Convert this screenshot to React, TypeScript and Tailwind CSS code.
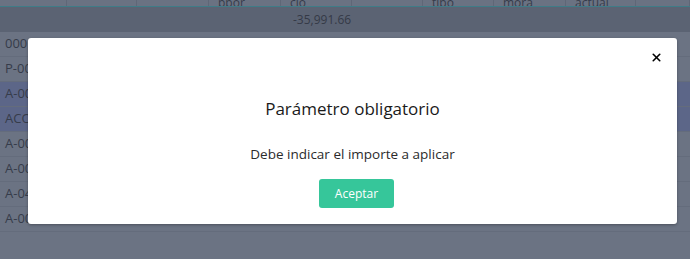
import { X } from 'lucide-react';

const cols = [67, 70, 72, 72, 71, 71, 71, 72, 70, 54];
const headers = ['', '', '', 'ppor', 'cio', '', 'tipo', 'mora', 'actual', ''];
const rows = [
  { code: '000', hi: false },
  { code: 'P-00', hi: false },
  { code: 'A-00', hi: true },
  { code: 'ACO', hi: true },
  { code: 'A-00', hi: false },
  { code: 'A-00', hi: false },
  { code: 'A-04', hi: false },
  { code: 'A-00', hi: false },
];

export default function App() {
  return (
    <div
      className="relative h-[259px] w-[690px] overflow-hidden bg-[#6b7383]"
      style={{ fontFamily: '"Open Sans", "Noto Sans", sans-serif' }}
    >
      {/* tabla de fondo (ya oscurecida por el overlay) */}
      <div className="flex h-[7px] overflow-hidden border-b border-[#3f7c87] bg-[#6a7282]">
        {cols.map((w, i) => (
          <div
            key={i}
            style={{ width: w }}
            className="relative shrink-0 border-r border-[#5f6777] text-[12px] leading-[12px] text-[#363c4a]"
          >
            <span className="absolute bottom-[-3px] left-[9px]">{headers[i]}</span>
          </div>
        ))}
      </div>
      <div className="flex h-[25px] items-center bg-[#5b6373]">
        <div className="w-[293px] shrink-0" />
        <span className="text-[12px] text-[#353a47]">-35,991.66</span>
      </div>
      {rows.map((r, i) => (
        <div
          key={i}
          className={`flex h-[25px] items-center border-b border-[#646c7c] pl-[5px] text-[13px] text-[#363c4a] ${
            r.hi ? 'bg-[#5c6688]' : 'bg-[#6b7383]'
          }`}
        >
          {r.code}
        </div>
      ))}

      {/* modal */}
      <div className="absolute left-[28px] top-[38px] flex h-[186px] w-[649px] flex-col items-center rounded-[3px] bg-white shadow-[0_1px_3px_rgba(0,0,0,0.3)]">
        <button className="absolute right-[14px] top-[13px] text-black">
          <X className="h-[13px] w-[13px]" strokeWidth={3} />
        </button>
        <h2 className="mt-[59px] text-[17px] font-medium leading-[24px] text-[#1a1a1a]">
          Parámetro obligatorio
        </h2>
        <p className="mt-[23px] text-[13.5px] leading-[20px] text-[#2b2b2b]">
          Debe indicar el importe a aplicar
        </p>
        <button className="ml-[8px] mt-[15px] h-[29px] w-[75px] rounded-[3px] bg-[#36c69a] text-[12px] text-white">
          Aceptar
        </button>
      </div>
    </div>
  );
}
